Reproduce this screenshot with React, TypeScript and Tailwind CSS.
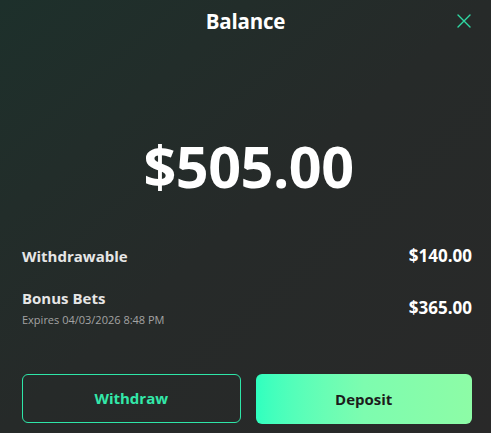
import React from 'react';

function CloseIcon() {
  return (
    <svg width="16" height="16" viewBox="0 0 16 16" fill="none" stroke="#2fd9a3" strokeWidth="1.4" strokeLinecap="round">
      <path d="M2 2 L14 14 M14 2 L2 14" />
    </svg>
  );
}

export default function App() {
  return (
    <div
      className="w-[491px] h-[433px] relative overflow-hidden bg-gradient-to-br from-[#1d302b] via-[#262a29] to-[#292929] text-white"
      style={{ fontFamily: '"Open Sans", "Noto Sans", sans-serif' }}
    >
      <div className="flex items-center justify-center h-[43px] relative">
        <h1 className="text-[20.5px] font-bold tracking-[-0.2px]">Balance</h1>
        <button className="absolute right-[19px] top-[13px]">
          <CloseIcon />
        </button>
      </div>

      <div className="flex justify-center pt-[88px] pl-[6px] h-[200px]">
        <span className="text-[57.5px] leading-[70px] font-bold tracking-[-0.5px]">$505.00</span>
      </div>

      <div className="pl-[22px] pr-[19px] flex flex-col">
        <div className="flex items-center justify-between h-[26px]">
          <span className="text-[15px] font-bold text-[#e6e6e6]">Withdrawable</span>
          <span className="text-[17px] font-bold">$140.00</span>
        </div>
        <div className="flex items-center justify-between mt-[19px]">
          <div className="flex flex-col">
            <span className="text-[15px] font-bold text-[#e6e6e6] leading-[20px]">Bonus Bets</span>
            <span className="text-[11px] text-[#a3a3a3] leading-[16px] mt-[4px]">Expires 04/03/2026 8:48 PM</span>
          </div>
          <span className="text-[17px] font-bold">$365.00</span>
        </div>
      </div>

      <div className="absolute left-[22px] right-[19px] top-[374px] flex gap-[15px]">
        <button className="flex-1 h-[49px] rounded-[6px] border border-[#2ee6a8] text-[#33e8aa] text-[15px] font-bold">
          Withdraw
        </button>
        <button className="flex-1 h-[50px] rounded-[6px] bg-gradient-to-r from-[#2fffbf] via-[#7dfcaf] to-[#8dfca6] text-[#1c1c1c] text-[15px] font-bold">
          Deposit
        </button>
      </div>
    </div>
  );
}
